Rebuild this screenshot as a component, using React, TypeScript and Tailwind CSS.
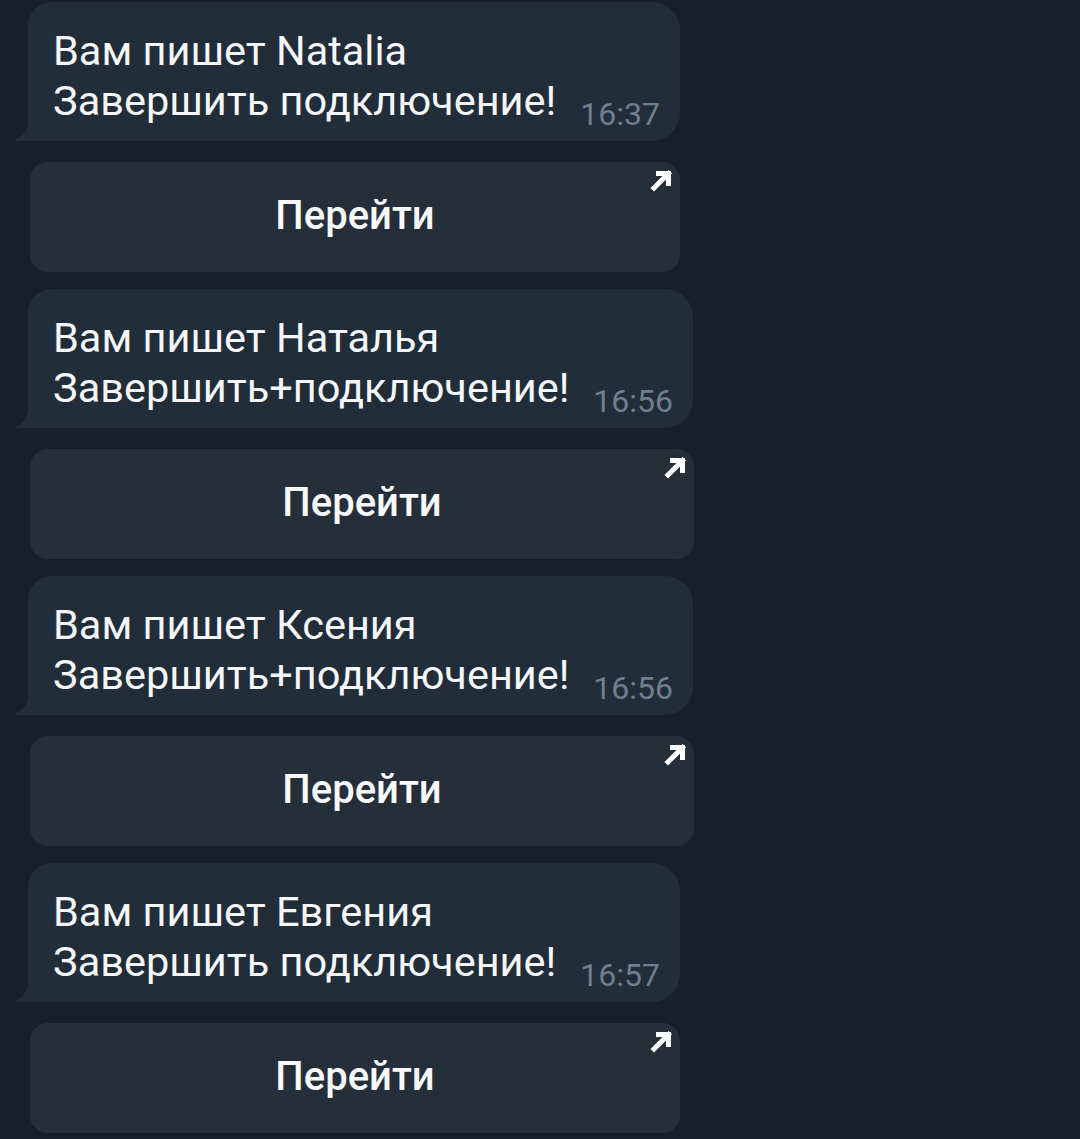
import React from "react";

type Msg = {
  name: string;
  text: string;
  time: string;
  width: string;
};

const messages: Msg[] = [
  { name: "Natalia", text: "Завершить подключение!", time: "16:37", width: "w-[652px]" },
  { name: "Наталья", text: "Завершить+подключение!", time: "16:56", width: "w-[665px]" },
  { name: "Ксения", text: "Завершить+подключение!", time: "16:56", width: "w-[665px]" },
  { name: "Евгения", text: "Завершить подключение!", time: "16:57", width: "w-[652px]" },
];

const buttonWidths = ["w-[650px]", "w-[664px]", "w-[664px]", "w-[650px]"];

// little arrow in the corner of the inline button
const LinkArrow = () => (
  <svg width="26" height="26" viewBox="0 0 26 26" fill="none" className="absolute top-[5px] right-[5px]">
    <path d="M5 21 L19.5 6.5" stroke="#ffffff" strokeWidth="5" strokeLinecap="square" />
    <path d="M9.5 6.5 H19.5 V16.5" stroke="#ffffff" strokeWidth="5" strokeLinecap="square" />
  </svg>
);

// bubble tail on bottom-left
const Tail = () => (
  <svg width="15" height="24" viewBox="0 0 15 24" className="absolute bottom-0 left-[-14px]">
    <path d="M15 0 C15 12 9 20 1 22.5 C0 23 0.5 24 1.5 24 L15 24 Z" fill="#212d39" />
  </svg>
);

const Bubble = ({ msg }: { msg: Msg }) => (
  <div
    className={`${msg.width} h-[139px] relative bg-[#212d39] rounded-tl-[24px] rounded-tr-[28px] rounded-br-[28px] flex items-end pl-[25px] pr-[20px] pb-[15px]`}
  >
    <Tail />
    <div className="text-[41.5px] leading-[50px] text-[#f4f6f8] whitespace-nowrap">
      <div>Вам пишет {msg.name}</div>
      <div>{msg.text}</div>
    </div>
    <span className="ml-auto mb-[-3px] text-[32px] leading-[30px] text-[#6f7f8e] whitespace-nowrap">
      {msg.time}
    </span>
  </div>
);

export default function App() {
  return (
    <div
      className="w-[1080px] h-[1139px] bg-[#17202a] overflow-hidden pt-[2px] pl-[28px] flex flex-col gap-[17px]"
      style={{ fontFamily: "Roboto, 'Noto Sans', sans-serif" }}
    >
      {messages.map((m, i) => (
        <div key={i} className="flex flex-col gap-[21px]">
          <Bubble msg={m} />
          <div
            className={`${buttonWidths[i]} ml-[2px] h-[110px] relative bg-[#252f3a] rounded-[18px] flex items-center justify-center`}
          >
            <span className="text-[40px] font-medium text-[#f7f8fa] leading-none mt-[-2px]">Перейти</span>
            <LinkArrow />
          </div>
        </div>
      ))}
    </div>
  );
}
